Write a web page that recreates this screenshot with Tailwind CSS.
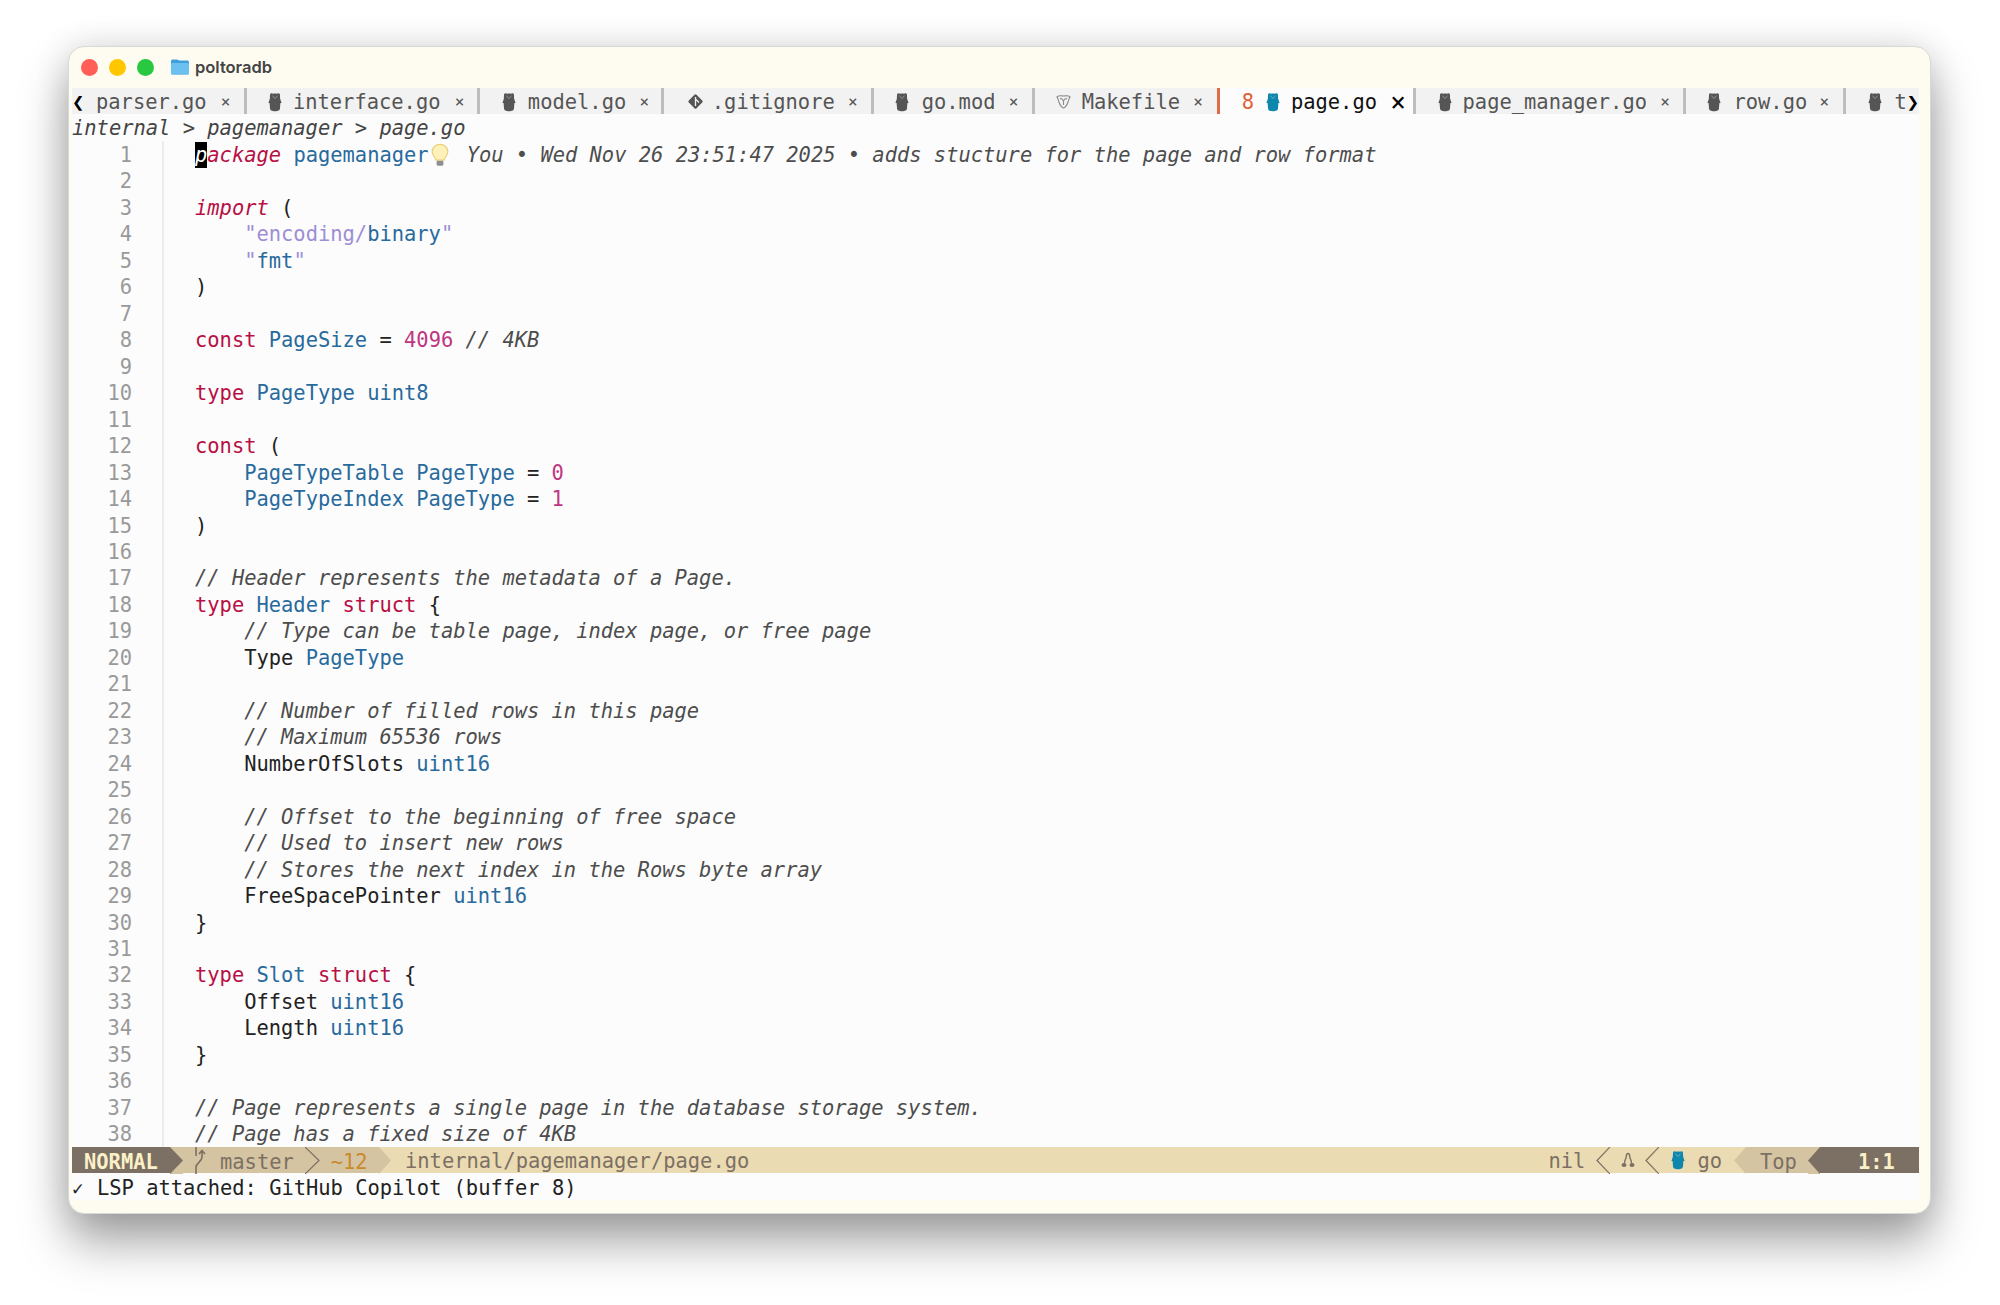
<!DOCTYPE html>
<html>
<head>
<meta charset="utf-8">
<script src="https://cdn.jsdelivr.net/npm/@tailwindcss/browser@4"></script>
<title>poltoradb</title>
</head>
<body class="bg-white">
<svg width="0" height="0" class="absolute">
  <defs>
    <symbol id="gopher" viewBox="0 0 14 20"><path fill="currentColor" d="M2 3C2 1 4 .8 5 1.800C6 1.400 8 1.400 9 1.800C10 .8 12 1 12 3C12 4 12 5 12.200 7L13.600 11L12.400 11L12 16C12 18.600 10 19.200 7 19.200C4 19.200 2 18.600 2 16L1.600 11L.4 11L1.800 7Z"/><path d="M4.400 3.600L7 6.600L9.600 3.600" fill="none" stroke="#fff" stroke-opacity=".35" stroke-width="1"/></symbol>
  </defs>
</svg>
<div class="w-[2000px] h-[1305px] pt-[46px] pl-[68px] overflow-hidden font-['DejaVu_Sans_Mono','Liberation_Mono',monospace] text-[20.43px] leading-[26.47px] text-[#222]">
  <div class="w-[1863px] h-[1168px] rounded-[16px] border border-[#d8d8d8] bg-[#fefcf1] shadow-[0_28px_48px_rgba(0,0,0,0.36),0_0_34px_rgba(0,0,0,0.12)] pl-[3px] pr-[11px]">
    <div class="h-[41px] -ml-[2px] flex items-center pb-[1px] font-['Inter',sans-serif] text-[16.5px] font-semibold text-[#444]">
      <span class="w-[17px] h-[17px] rounded-full bg-[#ff5f57] ml-[11px]"></span>
      <span class="w-[17px] h-[17px] rounded-full bg-[#ffc700] ml-[11px]"></span>
      <span class="w-[17px] h-[17px] rounded-full bg-[#28c840] ml-[11px]"></span>
      <svg class="ml-[17px]" width="18" height="16" viewBox="0 0 18 16"><path fill="#3f9fdc" d="M0 2.500C0 1 1 .5 2 .5H6C7 .5 7.500 1.500 8.500 1.500H16C17 1.500 18 2 18 3.500V14C18 15 17 15.500 16 15.500H2C1 15.500 0 15 0 14Z"/><rect x="0" y="4" width="18" height="11.500" rx="1.500" fill="#6cc0f0"/></svg>
      <span class="ml-[6px]">poltoradb</span>
    </div>

    <div class="flex h-[26.47px] leading-[24px] [&_span]:pt-[2px] [&_svg]:mt-[1px] bg-[#f2f2f2] text-[#555] overflow-hidden">
      <div class="flex items-center w-[175px] border-r-[3px] border-[#bdbdbd]"><span class="w-[24px] text-black font-bold">❮</span><span>parser.go</span><span class="ml-[13px] text-[16px] w-[12px] text-center">×</span></div>
      <div class="flex items-center w-[233px] border-r-[3px] border-[#bdbdbd] pl-[21px]"><svg class="w-[14px] h-[20px] text-[#555]"><use href="#gopher"/></svg><span class="ml-[11px]">interface.go</span><span class="ml-[13px] text-[16px] w-[12px] text-center">×</span></div>
      <div class="flex items-center w-[184px] border-r-[3px] border-[#bdbdbd] pl-[22px]"><svg class="w-[14px] h-[20px] text-[#555]"><use href="#gopher"/></svg><span class="ml-[12px]">model.go</span><span class="ml-[12px] text-[16px] w-[12px] text-center">×</span></div>
      <div class="flex items-center w-[210px] border-r-[3px] border-[#bdbdbd] pl-[23px]"><svg width="17" height="17" viewBox="0 0 17 17"><rect x="3" y="3" width="11" height="11" rx="1.500" transform="rotate(45 8.500 8.500)" fill="#555"/><path d="M8.500 4V13M8.500 6L12 9.500" stroke="#f2f2f2" stroke-width="1.300" fill="none"/></svg><span class="ml-[8px]">.gitignore</span><span class="ml-[12px] text-[16px] w-[12px] text-center">×</span></div>
      <div class="flex items-center w-[161px] border-r-[3px] border-[#bdbdbd] pl-[21px]"><svg class="w-[14px] h-[20px] text-[#555]"><use href="#gopher"/></svg><span class="ml-[13px]">go.mod</span><span class="ml-[12px] text-[16px] w-[12px] text-center">×</span></div>
      <div class="flex items-center w-[185px] border-r-[3px] border-[#bdbdbd] pl-[21px]"><svg width="15" height="15" viewBox="0 0 15 15" fill="none" stroke="#8a8a8a" stroke-width="1.100"><path d="M1 3C3 1 5 2 7.500 2C10 2 12 1 14 3C13 4 13 6 12 8C11 11 9 13.500 7.500 14C6 13.500 4 11 3 8C2 6 2 4 1 3Z"/><path d="M4 5C5.500 4 6.500 5 7.500 7C8.500 5 9.500 4 11 5M7.500 7V11"/></svg><span class="ml-[11px]">Makefile</span><span class="ml-[12px] text-[16px] w-[12px] text-center">×</span></div>
      <div class="flex items-center w-[199px] border-l-[3px] -ml-[3px] border-r-[3px] border-l-[#e06c45] border-r-[#bdbdbd] bg-[#fcfcfc] text-[#111] pl-[22px]"><span class="text-[#e0613a]">8</span><svg class="ml-[12px] w-[14px] h-[20px] text-[#0f86ab]"><use href="#gopher"/></svg><span class="ml-[11px]">page.go</span><span class="ml-[11px] text-[26px] w-[20px] text-center text-black">×</span></div>
      <div class="flex items-center w-[271px] border-r-[3px] border-[#bdbdbd] pl-[22px]"><svg class="w-[14px] h-[20px] text-[#555]"><use href="#gopher"/></svg><span class="ml-[11px]">page_manager.go</span><span class="ml-[12px] text-[16px] w-[12px] text-center">×</span></div>
      <div class="flex items-center w-[160px] border-r-[3px] border-[#bdbdbd] pl-[21px]"><svg class="w-[14px] h-[20px] text-[#555]"><use href="#gopher"/></svg><span class="ml-[12px]">row.go</span><span class="ml-[11px] text-[16px] w-[12px] text-center">×</span></div>
      <div class="flex items-center flex-1 pl-[22px]"><svg class="w-[14px] h-[20px] text-[#555]"><use href="#gopher"/></svg><span class="ml-[12px]">t</span><span class="text-black font-bold">❯</span></div>
    </div>

    <div class="h-[26.47px] pt-[1px] bg-[#fcfcfc] italic text-[#444] whitespace-pre">internal &gt; pagemanager &gt; page.go</div>

    <div class="flex h-[1005.9px] bg-[#fcfcfc] overflow-hidden">
      <div class="w-[92px] shrink-0 border-r-2 border-[#ececec] pt-[1px] pr-[30px] text-right text-[#999]">
        <div>1</div><div>2</div><div>3</div><div>4</div><div>5</div><div>6</div><div>7</div><div>8</div><div>9</div><div>10</div><div>11</div><div>12</div><div>13</div><div>14</div><div>15</div><div>16</div><div>17</div><div>18</div><div>19</div><div>20</div><div>21</div><div>22</div><div>23</div><div>24</div><div>25</div><div>26</div><div>27</div><div>28</div><div>29</div><div>30</div><div>31</div><div>32</div><div>33</div><div>34</div><div>35</div><div>36</div><div>37</div><div>38</div>
      </div>
      <div class="pl-[31px] pt-[1px] flex-1 [&>div]:whitespace-pre">
        <div class="flex items-center h-[26.47px]"><span class="bg-black text-white italic">p</span><span class="italic text-[#b80f44]">ackage</span><span> </span><span class="text-[#286a9c]">pagemanager</span><svg class="ml-[2px]" width="18" height="24" viewBox="0 0 16 21"><path d="M8 1C4 1 1 4 1 7.500C1 10.500 3.500 12 4.500 15H11.500C12.500 12 15 10.500 15 7.500C15 4 12 1 8 1Z" fill="#fdf0b8" stroke="#e8cf7d"/><rect x="5" y="15.500" width="6" height="4.500" rx="1" fill="#8f8f8f"/></svg><span class="ml-[18px] italic text-[#4d4d4d]">You • Wed Nov 26 23:51:47 2025 • adds stucture for the page and row format</span></div>
        <div class="h-[26.47px]"></div>
        <div class="h-[26.47px]"><span class="italic text-[#b80f44]">import</span> (</div>
        <div class="h-[26.47px]">    <span class="text-[#9d8ed6]">"encoding/</span><span class="text-[#286a9c]">binary</span><span class="text-[#9d8ed6]">"</span></div>
        <div class="h-[26.47px]">    <span class="text-[#9d8ed6]">"</span><span class="text-[#286a9c]">fmt</span><span class="text-[#9d8ed6]">"</span></div>
        <div class="h-[26.47px]">)</div>
        <div class="h-[26.47px]"></div>
        <div class="h-[26.47px]"><span class="text-[#b80f44]">const</span> <span class="text-[#286a9c]">PageSize</span> = <span class="text-[#c0357f]">4096</span> <span class="italic text-[#4d4d4d]">// 4KB</span></div>
        <div class="h-[26.47px]"></div>
        <div class="h-[26.47px]"><span class="text-[#b80f44]">type</span> <span class="text-[#286a9c]">PageType</span> <span class="text-[#286a9c]">uint8</span></div>
        <div class="h-[26.47px]"></div>
        <div class="h-[26.47px]"><span class="text-[#b80f44]">const</span> (</div>
        <div class="h-[26.47px]">    <span class="text-[#286a9c]">PageTypeTable</span> <span class="text-[#286a9c]">PageType</span> = <span class="text-[#c0357f]">0</span></div>
        <div class="h-[26.47px]">    <span class="text-[#286a9c]">PageTypeIndex</span> <span class="text-[#286a9c]">PageType</span> = <span class="text-[#c0357f]">1</span></div>
        <div class="h-[26.47px]">)</div>
        <div class="h-[26.47px]"></div>
        <div class="h-[26.47px] italic text-[#4d4d4d]">// Header represents the metadata of a Page.</div>
        <div class="h-[26.47px]"><span class="text-[#b80f44]">type</span> <span class="text-[#286a9c]">Header</span> <span class="text-[#b80f44]">struct</span> {</div>
        <div class="h-[26.47px] italic text-[#4d4d4d]">    // Type can be table page, index page, or free page</div>
        <div class="h-[26.47px]">    Type <span class="text-[#286a9c]">PageType</span></div>
        <div class="h-[26.47px]"></div>
        <div class="h-[26.47px] italic text-[#4d4d4d]">    // Number of filled rows in this page</div>
        <div class="h-[26.47px] italic text-[#4d4d4d]">    // Maximum 65536 rows</div>
        <div class="h-[26.47px]">    NumberOfSlots <span class="text-[#286a9c]">uint16</span></div>
        <div class="h-[26.47px]"></div>
        <div class="h-[26.47px] italic text-[#4d4d4d]">    // Offset to the beginning of free space</div>
        <div class="h-[26.47px] italic text-[#4d4d4d]">    // Used to insert new rows</div>
        <div class="h-[26.47px] italic text-[#4d4d4d]">    // Stores the next index in the Rows byte array</div>
        <div class="h-[26.47px]">    FreeSpacePointer <span class="text-[#286a9c]">uint16</span></div>
        <div class="h-[26.47px]">}</div>
        <div class="h-[26.47px]"></div>
        <div class="h-[26.47px]"><span class="text-[#b80f44]">type</span> <span class="text-[#286a9c]">Slot</span> <span class="text-[#b80f44]">struct</span> {</div>
        <div class="h-[26.47px]">    Offset <span class="text-[#286a9c]">uint16</span></div>
        <div class="h-[26.47px]">    Length <span class="text-[#286a9c]">uint16</span></div>
        <div class="h-[26.47px]">}</div>
        <div class="h-[26.47px]"></div>
        <div class="h-[26.47px] italic text-[#4d4d4d]">// Page represents a single page in the database storage system.</div>
        <div class="h-[26.47px] italic text-[#4d4d4d]">// Page has a fixed size of 4KB</div>
      </div>
    </div>

    <div class="flex items-center h-[26.47px] bg-[#ebdbb2] text-[#7c6f64]">
      <div class="w-[98px] h-full pt-[2px] bg-[#7c6f64] text-[#fbf1c7] font-bold pl-[12px]">NORMAL</div>
      <svg class="bg-[#d5c4a1] shrink-0" width="13" height="27" viewBox="0 0 13 27"><path d="M0 0L13 13.500L0 27Z" fill="#7c6f64"/></svg>
      <div class="flex w-[196px] h-full pt-[2px] bg-[#d5c4a1]">
        <svg class="ml-[10px] -mt-[2px] shrink-0" width="16" height="27" viewBox="0 0 16 27" fill="none" stroke="#7c6f64" stroke-width="1.600"><path d="M3 0V9M3 27V20C3 16 9 15 9 10V4M6 7L9 3.500L12 7"/></svg>
        <span class="ml-[11px]">master</span>
        <svg class="ml-[11px] -mt-[2px] shrink-0" width="15" height="27" viewBox="0 0 15 27" fill="none" stroke="#7c6f64" stroke-width="1.200"><path d="M0 0L14 13.500L0 27"/></svg>
        <span class="ml-[11px] text-[#c98a2e]">~12</span>
      </div>
      <svg class="shrink-0" width="12" height="27" viewBox="0 0 12 27"><path d="M0 0L12 13.500L0 27Z" fill="#d5c4a1"/></svg>
      <span class="ml-[14px] pt-[2px]">internal/pagemanager/page.go</span>
      <span class="flex-1"></span>
      <span class="pt-[2px]">nil</span>
      <svg class="ml-[11px] shrink-0" width="14" height="27" viewBox="0 0 14 27" fill="none" stroke="#7c6f64" stroke-width="1.200"><path d="M14 0L1 13.500L14 27"/></svg>
      <svg class="ml-[11px] shrink-0" width="14" height="27" viewBox="0 0 14 27" fill="none" stroke="#7c6f64" stroke-width="1.400"><path d="M7 6.500C5.500 6.500 5.300 8 5.300 9.500C5.300 11.500 3.500 13 3.500 16M7 6.500C8.500 6.500 8.700 8 8.700 9.500C8.700 11.500 10.500 13 10.500 16"/><ellipse cx="3" cy="18" rx="2.500" ry="2" fill="#7c6f64" stroke="none"/><ellipse cx="11" cy="18" rx="2.500" ry="2" fill="#7c6f64" stroke="none"/></svg>
      <svg class="ml-[10px] shrink-0" width="14" height="27" viewBox="0 0 14 27" fill="none" stroke="#7c6f64" stroke-width="1.200"><path d="M14 0L1 13.500L14 27"/></svg>
      <svg class="ml-[12px] w-[14px] h-[20px] text-[#0f86ab]"><use href="#gopher"/></svg>
      <span class="ml-[12px] pt-[2px]">go</span>
      <svg class="ml-[12px] shrink-0" width="12" height="27" viewBox="0 0 12 27"><path d="M12 0L0 13.500L12 27Z" fill="#d5c4a1"/></svg>
      <div class="w-[62px] h-full pt-[2px] bg-[#d5c4a1] pl-[14px]">Top</div>
      <svg class="bg-[#d5c4a1] shrink-0" width="12" height="27" viewBox="0 0 12 27"><path d="M12 0L0 13.500L12 27Z" fill="#7c6f64"/></svg>
      <div class="w-[99px] h-full pt-[2px] bg-[#7c6f64] text-[#fbf1c7] font-bold pl-[38px]">1:1</div>
    </div>

    <div class="flex h-[26.47px] pt-[2px] bg-[#fcfcfc] whitespace-pre"><span class="w-[25px] text-[19px]">✓</span><span>LSP attached: GitHub Copilot (buffer 8)</span></div>
  </div>
</div>
</body>
</html>
